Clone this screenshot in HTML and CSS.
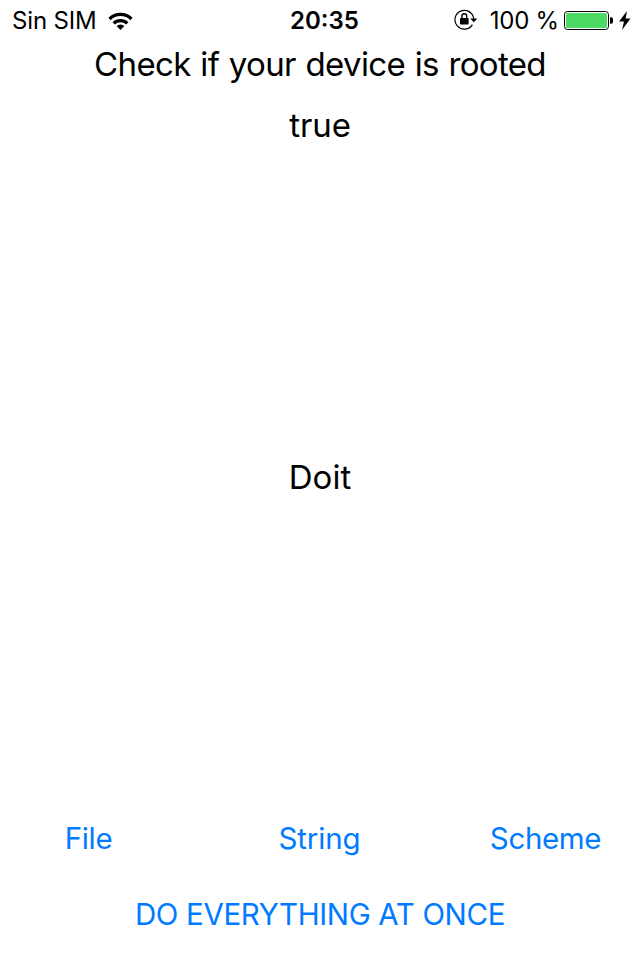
FILE: index.html
```html
<!DOCTYPE html>
<html lang="es">
<head>
<meta charset="utf-8">
<title>Root check</title>
<link rel="stylesheet" href="styles.css">
</head>
<body>
<div class="screen">
  <header class="status">
    <div class="status-left"><span class="carrier">Sin SIM</span>
      <svg class="wifi" width="25" height="19" viewBox="0 0 25 19"><g fill="none" stroke="#000" stroke-width="3.2"><path d="M1.5 7a15.6 15.6 0 0 1 22 0"/><path d="M5.7 11.4a9.6 9.6 0 0 1 13.6 0"/></g><path d="M12.5 18l-3.9-3.9a5.5 5.5 0 0 1 7.8 0z"/></svg>
    </div>
    <time class="clock">20:35</time>
    <div class="status-right">
      <svg class="lock" width="24" height="22" viewBox="0 0 24 22"><path d="M18.4 15.6A9.4 9.4 0 1 1 19.7 9.8" fill="none" stroke="#000" stroke-width="1.2"/><path d="M16.2 9.4h7.2L19.8 13.2z"/><rect x="6" y="9" width="8.6" height="6.4" rx=".7"/><path d="M7.9 10V7.2a2.4 2.4 0 0 1 4.8 0V10" fill="none" stroke="#000" stroke-width="1.4"/></svg>
      <span class="percent">100 %</span>
      <svg class="battery" width="50" height="20" viewBox="0 0 50 20"><rect x=".5" y=".5" width="44" height="18" rx="3" fill="none" stroke="#000"/><rect x="2" y="2" width="41" height="15" rx="1.5" fill="#4cd964"/><path d="M46 6.3h1a2 2 0 0 1 2 2v2.4a2 2 0 0 1-2 2h-1z"/></svg>
      <svg class="bolt" width="12" height="20" viewBox="0 0 12 20"><path d="M8 0L0 10.5h5L3 19 11.5 7.5H6.7z"/></svg>
    </div>
  </header>
  <main class="content">
    <h1 class="label title">Check if your device is rooted</h1>
    <p class="label result">true</p>
    <p class="label action">Doit</p>
  </main>
  <nav class="buttons">
    <button class="link file">File</button>
    <button class="link string">String</button>
    <button class="link scheme">Scheme</button>
  </nav>
  <footer class="footer"><button class="link all">DO EVERYTHING AT ONCE</button></footer>
</div>
</body>
</html>
```
FILE: styles.css
```css
* { box-sizing: border-box; }
body { margin: 0; background: #fff; color: #000; font-family: Inter, "Liberation Sans", sans-serif; }
.screen { width: 640px; height: 960px; display: flex; flex-direction: column; overflow: hidden; }
.status { height: 40px; display: grid; grid-template-columns: 278px 93px 1fr; align-items: center; padding: 1px 9px 0 12px; font-size: 24px; line-height: 40px; white-space: nowrap; }
.status-left, .status-right { display: flex; align-items: center; }
.status-left { gap: 11px; }
.carrier { letter-spacing: -0.15px; }
.status-right { justify-content: flex-end; }
.clock { font-weight: 600; letter-spacing: 0; }
.lock { margin-bottom: 2px; }
.percent { margin: 0 5px 0 12px; letter-spacing: -0.2px; }
.bolt { margin-left: 5px; }
.content { height: 769px; display: flex; flex-direction: column; align-items: center; }
.label { margin: 0; font-size: 33px; font-weight: 400; line-height: 42px; white-space: nowrap; }
.title { margin-top: 3px; letter-spacing: -0.65px; word-spacing: 1px; }
.result { margin-top: 19px; letter-spacing: -0.1px; }
.action { margin-top: 310px; }
.buttons { height: 60px; display: grid; grid-template-columns: 177px 285px 167px; align-items: center; padding-bottom: 3px; }
.link { border: 0; padding: 0; background: none; color: #007aff; font: 400 29.5px/36px Inter, "Liberation Sans", sans-serif; white-space: nowrap; letter-spacing: -0.1px; }
.file { letter-spacing: -0.3px; }
.scheme { letter-spacing: -0.35px; }
.footer { display: flex; justify-content: center; margin-top: 27px; }
.all { letter-spacing: -0.35px; }
```
